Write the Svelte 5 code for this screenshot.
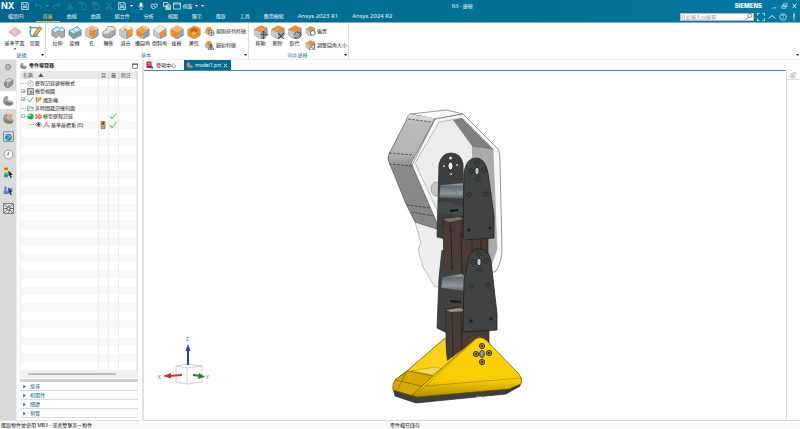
<script>
  const menus = ['首頁', '曲線', '曲面', '組立件', '分析', '視圖', '顯示', '選取', '工具', '應用模組', 'Ansys 2023 R1', 'Ansys 2024 R2'];
  const basic = [
    ['拉伸', 'extrude'], ['旋轉', 'revolve'], ['孔', 'hole'], ['聯集', 'unite'], ['減去', 'subtract'],
    ['邊圓角', 'blend'], ['倒斜角', 'chamfer'], ['拔模', 'draft'], ['薄殼', 'shell']
  ];
  const sync = [['移動', 'move'], ['刪除', 'delete'], ['取代', 'replace']];
  const rail = ['gear', 'assembly', 'part', 'reuse', 'web', 'clock', 'palette', 'role', 'graph'];
  const tree = [
    { text: '歷程記錄建模模式', icon: 'clock' },
    { text: '模型視圖', icon: 'views', box: '+' },
    { text: '攝影機', icon: 'camera', box: '+', check: true },
    { text: '非時間戳記幾何圖', icon: 'folder' },
    { text: '模型歷程記錄', icon: 'history', box: '-', ok: true },
    { text: '基準座標系 (0)', icon: 'csys', child: true, ok: true, mark: true }
  ];
  const rows = [...tree, ...Array(29).fill(null)];
  const sections = ['搜尋', '相關性', '細節', '預覽'];
</script>

{#snippet icon(kind)}
  <svg class="icon" viewBox="0 0 16 16" aria-hidden="true">
    {#if ['hole', 'subtract', 'blend', 'chamfer', 'draft', 'shell', 'move', 'delete', 'replace', 'offset', 'resize'].includes(kind)}
      <path d="M1 5 8 1l7 3v8l-7 4-7-4z" fill="#a4a4a4" stroke="#6b6b6b" stroke-width=".7" />
      <path d="m1 5 7-4 7 3-7 4z" fill="#e6e6e6" />
      <path d="m1 5 7 3v8l-7-4z" fill="#c7c7c7" />
    {/if}
    {#if kind === 'plane'}
      <path d="m1 8 7-5 7 5-7 5z" fill="#f4bccd" stroke="#d66e8c" stroke-width=".7" />
    {:else if kind === 'sketch'}
      <path d="M1 3h11M3 1v12h9" fill="none" stroke="#2d99ba" />
      <circle cx="7" cy="8" r="5" fill="none" stroke="#49a9c4" />
      <path d="m6 13 1-4 6-7 3 2-6 7z" fill="#f5b22d" stroke="#64512d" stroke-width=".7" />
    {:else if kind === 'extrude'}
      <path d="m1 6 6-4 3 2 3-1 3 3v7l-4 2-3-3-3 3-5-3z" fill="#aaa" stroke="#777" stroke-width=".6" />
      <path d="m1 6 6-4 3 2 3-1 3 3-4 2-3-2-4 3z" fill="#d9eff4" stroke="#2bb0cf" />
    {:else if kind === 'revolve'}
      <path d="m1 7 10-5 4 4v6l-9 4-5-5z" fill="#929292" stroke="#777" stroke-width=".6" />
      <path d="m1 7 9-5 5 4-9 4z" fill="#d7eef3" stroke="#2bb0cf" />
      <path d="m4 5 7 4M1 11l5 4 9-4" fill="none" stroke="#56b9cf" />
    {:else if kind === 'hole'}
      <path d="M5 5v7l3 2 3-2V5" fill="#f68b1e" />
      <ellipse cx="8" cy="5" rx="3" ry="2" fill="#ffb15a" stroke="#c46a0c" stroke-width=".5" />
    {:else if kind === 'unite'}
      <path d="M1 9c0-2 2-3 4-3V4c1-3 9-3 10 0v7l-6 4c-4 0-8-1-8-3z" fill="#a9a9a9" stroke="#6d6d6d" stroke-width=".8" />
      <path d="M1 9c0-2 2-3 4-3V4c1-3 9-3 10 0 0 2-2 3-5 3-1 4-9 4-9 2z" fill="#e4e4e4" stroke="#888" stroke-width=".5" />
    {:else if kind === 'subtract'}
      <path d="m6 4 9-2v9l-5 2V8L5 6z" fill="#f8922b" /><path d="m6 2 4-1 5 3-5 2z" fill="#f6f6f6" />
    {:else if kind === 'blend'}
      <path d="m1 6 7 3-1 5-6-3z" fill="#ed851d" /><path d="m1 6 5-4 8 3-6 4z" fill="#ffa23a" /><path d="m9 9 6-4v7l-7 4z" fill="#999" />
    {:else if kind === 'chamfer'}
      <path d="m7 9 7-5 1 5-7 5z" fill="#f4902b" /><path d="m1 5 7-4 6 3-7 5z" fill="#eee" />
    {:else if kind === 'draft'}
      <path d="m1 5 8 3-1 8-6-4z" fill="#f38a23" /><path d="m1 5 7-4 7 3-6 4z" fill="#ffb25c" />
    {:else if kind === 'shell'}
      <path d="m1 5 7-4 7 3v8l-7 4-7-4z" fill="#f58c23" /><path d="m4 5 4-2 4 2v5l-4 2-4-2z" fill="#bd640b" /><path d="m4 9 4-2 4 2-4 3z" fill="#ffb35b" />
    {:else if kind === 'move' || kind === 'delete' || kind === 'replace' || kind === 'offset' || kind === 'resize'}
      <path d="m1 5 7-4 7 3-7 4z" fill="#f7942c" stroke="#c07626" stroke-width=".5" />
      {#if kind === 'move'}<path d="M11 7v9M7 11h9M9 9l2-2 2 2M9 14l2 2 2-2" fill="none" stroke="#444" />
      {:else if kind === 'delete'}<path d="m8 9 7 7m0-7-7 7" stroke="#444" stroke-width="1.2" />
      {:else if kind === 'replace'}<path d="M7 12c0-5 5-5 8-2l-2 1m2 0c-1 5-5 5-8 3" fill="none" stroke="#444" />
      {:else if kind === 'offset'}<path d="m8 9 4-2 3 2v4l-3 2-4-2z" fill="#fff" stroke="#333" />
      {:else}<path d="M6 16c1-5 4-8 8-9v9z" fill="#eee" stroke="#444" /><path d="m9 11 5 4" stroke="#444" />{/if}
    {:else if kind === 'pattern' || kind === 'mirror'}
      <path d="m1 7 5-3 5 3v5l-5 2-5-3z" fill="#bbb" stroke="#777" stroke-width=".6" />
      <path d="m3 3 4-2 4 2v4L7 9 3 7z" fill="#f58b20" />
      {#if kind === 'pattern'}<rect x="7" y="7" width="8" height="8" rx="2" fill="#eee" stroke="#444" /><path d="M11 7v8M7 11h8" stroke="#444" />
      {:else}<path d="m6 15 4-8v8zm5 0V7l4 8z" fill="#eee" stroke="#333" />{/if}
    {:else if kind === 'gear'}
      <circle cx="8" cy="8" r="5" fill="none" stroke="#777" stroke-width="2.5" stroke-dasharray="2 1.2" />
      <circle cx="8" cy="8" r="4" fill="#ddd" stroke="#777" /><circle cx="8" cy="8" r="1.5" fill="#777" />
    {:else if kind === 'assembly'}
      <path d="m3 6 6-4 5 2v6l-5 5-3 1-4-4z" fill="#8f8f8f" stroke="#555" stroke-width=".8" /><path d="m3 6 6-4 5 2-6 4z" fill="#d6d6d6" /><path d="M7 8v6" stroke="#ddd" />
    {:else if kind === 'part' || kind === 'reuse'}
      <path d="M1 9c0-6 4-8 6-6v5l7 2c2 4-3 6-7 5-4 0-6-2-6-6z" fill="#8b8b8b" stroke="#5b5b5b" stroke-width=".7" />
      <path d="M3 9c0-3 1-5 3-5l1 5 6 2" fill="none" stroke="#ddd" stroke-width="1" />
      <path d="M4 11c2 2 5 2 9 1" fill="none" stroke="#555" stroke-width=".8" />
      {#if kind === 'reuse'}<path d="m8 1 3 1 3-1-1 4 2 3-4-1-3 2V5z" fill="#f2a04e" />{/if}
    {:else if kind === 'web'}
      <path d="M1 1h14v14H1z" fill="#dce6e8" stroke="#555" /><circle cx="8" cy="9" r="5" fill="#2489a4" /><path d="M4 7c4-3 7 2 8 3M6 13c2-4 3-5 6-6" fill="none" stroke="#b9dfe3" />
    {:else if kind === 'clock'}
      <circle cx="8" cy="8" r="6.5" fill="#f5f5f5" stroke="#777" /><path d="M8 4v4H5" fill="none" stroke="#555" />
    {:else if kind === 'palette'}
      <path d="M2 1h5v4H2z" fill="#ef3c1c" /><path d="M2 4h5v4H2z" fill="#f9e628" /><path d="M2 8h5v4H2z" fill="#20d948" /><path d="M2 11h5v4H2z" fill="#237eed" /><path d="m8 5 6 6-3 1 2 3-2 1-2-4-1 1z" fill="#222" />
    {:else if kind === 'role'}
      <path d="M2 2h3v7h3v4H1V9h1zm5 2 7 1-1 4-6-1z" fill="#4887cf" /><path d="m8 5 6 5-3 1 2 3-2 1-2-4-1 1z" fill="#26384c" />
    {:else if kind === 'graph'}
      <path d="M1 1h14v14H1z" fill="#eee" stroke="#333" /><path d="m2 2 12 12M2 14 14 2M2 8h4l3-5M8 14l2-6h5" stroke="#333" fill="none" /><path d="M6 6h4v4H6z" fill="#fff" stroke="#333" />
    {:else if kind === 'views'}
      <path d="M1 1h14v14H1z" fill="#fff" stroke="#444" stroke-width="1.5" /><path d="M1 4h14M4 4v11" stroke="#555" /><path d="M7 7h5v5H7z" fill="#bbb" stroke="#333" />
    {:else if kind === 'camera'}
      <path d="M2 2h3v12H2zm5 3 7-3v6l-5 2-2 4z" fill="#ef9852" stroke="#9d5c30" stroke-width=".7" />
    {:else if kind === 'folder'}
      <path d="M1 13V3h5l2 2h6v2M1 13l3-6h12l-3 6z" fill="#fafafa" stroke="#555" />
    {:else if kind === 'history'}
      <path d="M1 2h4v12H1z" fill="#d4915b" /><path d="m6 5 4-2 5 2v6l-5 3-4-3z" fill="#ef8738" stroke="#8f674c" /><path d="m6 5 4 3 5-3" fill="none" stroke="#ffdbb3" />
    {:else if kind === 'csys'}
      <path d="m8 2 2 6 5 6-7-3-7 3 5-6z" fill="#f7bcc8" stroke="#d64d6c" stroke-width="1.2" />
    {:else if kind === 'eye'}
      <path d="M1 8c4-6 10-6 14 0-4 6-10 6-14 0z" fill="#fff" stroke="#222" stroke-width="1.3" /><circle cx="8" cy="8" r="3" fill="#222" />
    {:else if kind === 'check'}
      <path d="m2 8 4 6 9-12" fill="none" stroke="#2cce37" stroke-width="2" />
    {:else if kind === 'ball'}
      <circle cx="8" cy="8" r="7" fill="#1fae35" /><circle cx="6" cy="5" r="3" fill="#9aec9c" />
    {:else if kind === 'mark'}
      <path d="M4 1h8v14H4z" fill="#d89b6b" stroke="#64473a" /><path d="M6 3h4v4H6z" fill="#444" />
    {:else if kind === 'save'}
      <path d="M1 1h12l2 2v12H1zm3 0v5h8V1M4 15v-6h8v6M5 11h6" fill="none" stroke="currentColor" stroke-width="1.3" />
    {:else if kind === 'undo'}
      <path d="M6 2 2 6l4 4M2 6h8c6 0 6 7 1 8" fill="none" stroke="currentColor" stroke-width="1.3" />
    {:else if kind === 'redo'}
      <path d="m10 2 4 4-4 4m4-4H6c-6 0-6 7-1 8" fill="none" stroke="currentColor" stroke-width="1.3" />
    {:else if kind === 'cut'}
      <path d="m4 1 6 10M12 1 6 11" stroke="currentColor" /><circle cx="4" cy="13" r="2" fill="none" stroke="currentColor" /><circle cx="12" cy="13" r="2" fill="none" stroke="currentColor" />
    {:else if kind === 'copy'}
      <path d="M5 4H1V1h8v3M5 4h9v11H5z" fill="none" stroke="currentColor" />
    {:else if kind === 'mic'}
      <rect x="5" y="1" width="6" height="9" rx="3" fill="currentColor" /><path d="M3 7c0 7 10 7 10 0M8 12v4M5 15h6" fill="none" stroke="currentColor" />
    {:else if kind === 'hand'}
      <path d="M2 9c-1-5 3-6 6-3l3-2c4-1 5 4 2 6-3 1-4-1-5-3M5 8l-2 3 4 3 3-3" fill="none" stroke="currentColor" stroke-width="1.7" />
    {:else if kind === 'switch'}
      <path d="M1 1h9v8H1zm5 5h9v9H6z" fill="none" stroke="currentColor" stroke-width="1.5" /><path d="M6 9h8v5H6z" fill="currentColor" opacity=".6" />
    {:else if kind === 'window'}
      <path d="M1 2h14v12H1zM1 4h14" fill="none" stroke="currentColor" stroke-width="1.5" />
    {:else if kind === 'minimize'}
      <path d="M3 13h10" stroke="currentColor" stroke-width="2" />
    {:else if kind === 'restore'}
      <path d="M5 2h10v7H5zM1 7h10v7H1z" fill="none" stroke="currentColor" stroke-width="1.7" />
    {:else if kind === 'close'}
      <path d="m3 2 10 12M13 2 3 14" stroke="currentColor" stroke-width="2.4" />
    {:else if kind === 'full'}
      <path d="M1 5V1h4m6 0h4v4m0 6v4h-4m-6 0H1v-4" fill="none" stroke="currentColor" stroke-width="1.6" />
    {:else if kind === 'up'}
      <path d="m1 11 7-6 7 6" fill="none" stroke="currentColor" stroke-width="1.8" />
    {:else if kind === 'help'}
      <circle cx="8" cy="8" r="6.5" fill="none" stroke="currentColor" stroke-width="1.3" /><path d="M6 6c0-3 5-2 4 0-1 1-2 1-2 3m0 1v2" fill="none" stroke="currentColor" stroke-width="1.4" />
    {:else if kind === 'alert'}
      <path d="M8 1v10m0 2v2" stroke="currentColor" stroke-width="2.4" />
    {:else if kind === 'search'}
      <circle cx="10" cy="6" r="4.5" fill="#fff" stroke="#555" stroke-width="1.5" /><path d="m7 9-6 6" stroke="#555" stroke-width="2" />
    {:else if kind === 'discover'}
      <path d="M1 1h10v13H1z" fill="#c22445" /><path d="m3 3 6 5m0-5-5 7" stroke="#fff" /><path d="m9 8 6 4-2 4-5-2z" fill="#666" />
    {:else if kind === 'arrow'}
      <path d="m3 5 5 6 5-6z" fill="currentColor" />
    {:else if kind === 'right'}
      <path d="m4 2 8 6-8 6z" fill="currentColor" />
    {:else if kind === 'note'}
      <path d="m2 7 8-5 5 2-7 6zM1 10h12l-2 4H3z" fill="#ddd" stroke="#b6b6b6" />
    {/if}
  </svg>
{/snippet}

{#snippet holes(x, y)}
  <g transform="translate({x} {y})">
    <ellipse cx="0" cy="0" rx="2.4" ry="3.7" fill="#9aa6aa" stroke="#222" /><path d="M0-3v6" stroke="#e7edef" />
    {#each [[0, -8], [-6, 0], [7, -1], [1, 8], [-8, 24], [9, 23]] as [a, b]}
      <circle cx={a} cy={b} r="2.2" fill="#4d5051" stroke="#1e1e1e" stroke-width=".8" /><circle cx={a} cy={b} r=".8" fill="#222" />
    {/each}
  </g>
{/snippet}

<div class="app">
  <header>
    <div class="titlebar">
      <strong class="logo">NX</strong>
      <div class="quick">
        <button aria-label="儲存">{@render icon('save')}</button>
        <button class="dim" aria-label="復原">{@render icon('undo')}</button>
        <button class="dim slim" aria-label="復原清單">{@render icon('arrow')}</button>
        <button class="dim" aria-label="重做">{@render icon('redo')}</button>
        <button class="dim" aria-label="剪下">{@render icon('cut')}</button>
        <button class="dim" aria-label="複製">{@render icon('copy')}</button>
        <button class="dim" aria-label="貼上">{@render icon('copy')}</button>
        <button class="dim" aria-label="刪除">{@render icon('cut')}</button>
        <button aria-label="另存">{@render icon('save')}</button>
        <button class="slim" aria-label="儲存選項">{@render icon('arrow')}</button>
        <button aria-label="語音">{@render icon('mic')}</button>
        <button aria-label="觸控">{@render icon('hand')}</button>
        <button aria-label="切換視窗">{@render icon('switch')}</button>
        <button class="label">{@render icon('window')}視窗{@render icon('arrow')}</button>
        <button class="slim" aria-label="自訂">{@render icon('arrow')}</button>
      </div>
      <span class="title">NX - 建模</span>
      <div class="system">
        <strong>SIEMENS</strong>
        <button aria-label="最小化">{@render icon('minimize')}</button>
        <button aria-label="還原">{@render icon('restore')}</button>
        <button aria-label="關閉">{@render icon('close')}</button>
      </div>
    </div>
    <div class="menubar">
      <nav>
        <button class="file">檔案(F)</button>
        {#each menus as m, i}<button class:active={i === 0}>{m}</button>{/each}
      </nav>
      <div class="tools">
        <label class="search"><input aria-label="搜尋指令" placeholder="在此輸入以搜尋" />{@render icon('search')}</label>
        <button aria-label="全螢幕">{@render icon('full')}</button>
        <button aria-label="收合">{@render icon('up')}</button>
        <button aria-label="說明">{@render icon('help')}</button>
        <button aria-label="通知">{@render icon('alert')}</button>
      </div>
    </div>
  </header>

  <section class="ribbon">
    <div class="group build">
      <div class="commands">
        <button class="big plane">{@render icon('plane')}<span>基準平面</span>{@render icon('arrow')}</button>
        <button class="big">{@render icon('sketch')}<span>草圖</span></button>
      </div>
      <footer><span>建構</span>{@render icon('arrow')}</footer>
    </div>
    <div class="group base">
      <div class="commands">
        {#each basic as [name, kind]}<button class="big">{@render icon(kind)}<span>{name}</span></button>{/each}
        <div class="stack">
          <button>{@render icon('pattern')}規則排列特徵</button>
          <button>{@render icon('mirror')}鏡射特徵</button>
        </div>
      </div>
      <footer><span>基本</span>{@render icon('arrow')}</footer>
    </div>
    <div class="group sync">
      <div class="commands">
        {#each sync as [name, kind]}<button class="big">{@render icon(kind)}<span>{name}</span></button>{/each}
        <div class="stack">
          <button>{@render icon('offset')}偏置</button>
          <button>{@render icon('resize')}調整圓角大小</button>
        </div>
      </div>
      <footer><span>同步建模</span>{@render icon('arrow')}</footer>
    </div>
    <button class="options" aria-label="功能區選項">{@render icon('arrow')}</button>
  </section>

  <main>
    <aside class="rail">
      {#each rail as r}<button class:selected={r === 'part'} aria-label={r}>{@render icon(r)}</button>{/each}
    </aside>
    <section class="navigator">
      <h2>{@render icon('part')}<span>零件導覽器</span>{@render icon('window')}</h2>
      <table>
        <thead><tr><th>名稱 <i>▲</i></th><th>目</th><th>最</th><th>附註</th></tr></thead>
        <tbody>
          {#each rows as r}
            <tr>
              <td>
                {#if r}
                  <div class="node" class:child={r.child}>
                    <span class="branch">{#if r.box}<b>{r.box}</b>{/if}</span>
                    {#if r.check}{@render icon('check')}{/if}
                    {#if r.icon === 'history'}{@render icon('ball')}{/if}
                    {#if r.child}{@render icon('eye')}{/if}
                    {@render icon(r.icon)}<span>{r.text}</span>
                  </div>
                {/if}
              </td>
              <td>{#if r?.mark}{@render icon('mark')}{/if}</td>
              <td>{#if r?.ok}{@render icon('check')}{/if}</td>
              <td></td>
            </tr>
          {/each}
        </tbody>
      </table>
      <div class="scroll"><span></span></div>
      <div class="sections">
        {#each sections as s}<button>{@render icon('right')}{s}</button>{/each}
      </div>
    </section>
    <section class="work">
      <div class="tabs">
        <button>{@render icon('discover')}發現中心</button>
        <button class="current">{@render icon('part')}model1.prt {@render icon('close')}</button>
      </div>
      <div class="stage">
        <div class="canvas">
          <svg viewBox="144 71 642 349" role="img" aria-label="model1.prt">
            <defs>
              <linearGradient id="side" x1="0" y1="0" x2="0" y2="1"><stop offset="0" stop-color="#c5c5c5" /><stop offset=".1" stop-color="#bababa" /><stop offset=".34" stop-color="#b4b4b4" /><stop offset=".46" stop-color="#8a8a8a" /><stop offset="1" stop-color="#868686" /></linearGradient>
              <linearGradient id="tube" x1="0" y1="0" x2="0" y2="1"><stop offset="0" stop-color="#bdc9cc" /><stop offset=".2" stop-color="#606b71" /><stop offset=".65" stop-color="#8d979b" /><stop offset="1" stop-color="#50575c" /></linearGradient>
              <linearGradient id="yellow" x1="0" y1="0" x2="0" y2="1"><stop offset="0" stop-color="#ffd20c" /><stop offset=".72" stop-color="#f9cc00" /><stop offset="1" stop-color="#b48c00" /></linearGradient>
            </defs>
            <g stroke-linejoin="round">
              <path d="m415 222 6 21-3 7 5 17 12 20h12v-75z" fill="#eee" stroke="#888" stroke-width=".5" />
              <path d="m410 114 37-4 16 4-28 5z" fill="#fafafa" stroke="#555" stroke-width=".6" />
              <path d="m435 119 28-5 34 34q3 2 3 14l2 90q-2 15-7 20l-20 2-36-40-28-67z" fill="#f7f7f7" stroke="#555" stroke-width=".6" />
              <path d="m439 122 23-4 31 31 4 100-8 22-14 2-32-50-28-60z" fill="#ececec" stroke="#888" stroke-width=".5" />
              <path d="m453 120 9-2 31 31-21-3z" fill="#808080" />
              <path d="m472 146 21 3 4 100-8 22-15 2z" fill="#aaa" /><path d="m472 146 21 3" stroke="#555" stroke-width=".6" />
              <path d="M410 114q-3 2-4 7l-17 33q-2 4 0 8l17 42 9 18 25 8-29-67 24-44z" fill="url(#side)" stroke="#555" stroke-width=".7" />
              <path d="M410 114q-3 2-3 5l24 3 4-4z" fill="#d6d6d6" />
              <path d="m408 119 24 3M389 153l24 2M389 164l23 2M407 205l23 3m-19 4 23 4" stroke="#333" stroke-width=".7" stroke-dasharray="3 1" />

              <ellipse cx="436" cy="189" rx="5" ry="7" fill="#c7c7c7" stroke="#777" stroke-width=".5" />
              <path d="M439 164q3-11 12-11 10 0 12 11l1 74-18 1-9-2z" fill="#3d3e3f" stroke="#222" stroke-width=".7" />
              <ellipse cx="450.5" cy="166" rx="2.6" ry="4" fill="#f4f4f4" stroke="#222" /><circle cx="450.5" cy="158" r="1.5" fill="#ddd" /><g fill="#d0d0d0"><circle cx="444" cy="166" r="1" /><circle cx="457" cy="165" r="1" /><circle cx="451" cy="174" r="1" /></g>
              <path d="m440 185 23-2 1 16-25-1z" fill="url(#tube)" stroke="#333" stroke-width=".5" />
              <path d="m438 203 9-2 16 7v8l-25-4z" fill="#494a4a" /><path d="m450 211 8-1" stroke="#111" stroke-width="2" />
              <path d="m443 219 16-2 29 18v32l-21 6-23-5z" fill="#4c3b35" stroke="#282321" stroke-width=".7" />
              <path d="m450 220 1 50m11-50 1 53M472 239v20m9-20v20" stroke="#221b18" stroke-width=".6" />
              <path d="m443 219 16-2 5 2-15 3z" fill="#827169" />
              <path d="M464 173q2-15 12-15 9 0 12 15l6 43v22l-31 2z" fill="#414243" stroke="#202020" stroke-width=".8" />
              <path d="M467 165q1-7 9-7" fill="none" stroke="#777" stroke-width=".5" />
              {@render holes(477, 171)}
              <circle cx="469" cy="230" r="1.7" fill="#222" /><circle cx="490" cy="228" r="1.7" fill="#222" />
              <path d="m442 250-3 28-2 50 10 5 20-11V276z" fill="#414141" stroke="#222" stroke-width=".7" />
              <path d="m443 228 24 12v33l-23-5z" fill="#4c3b35" /><path d="m451 228 1 42m9-38 1 41" stroke="#2b211e" />
              <path d="m442 277 19-3 6 3v15l-26-4z" fill="url(#tube)" stroke="#333" stroke-width=".5" />
              <path d="m450 301 11 1" stroke="#191919" stroke-width="2" />
              <path d="m446 309 12-2 31 18v28l-43 8z" fill="#483c36" stroke="#292421" stroke-width=".7" />
              <path d="m446 310 14-2 5 3-14 1z" fill="#99918c" /><path d="m452 312 1 47m8-46 1 45" stroke="#2b2522" />
              <path d="M468 261q2-12 11-12 10 0 12 12l6 53v16l-34 2 1-51z" fill="#414243" stroke="#202020" stroke-width=".8" />
              {@render holes(479, 262)}
              <circle cx="471" cy="321" r="1.7" fill="#222" /><circle cx="491" cy="319" r="1.7" fill="#222" />

              <path d="m445 338-37 32-13 10-2 8 8 5 61-39-16 7z" fill="#e9b900" stroke="#6a5200" stroke-width=".7" />
              <path d="m408 371 30 4 31-30-22 16-2-22z" fill="#fbd21a" /><path d="m411 371 25-4 6 2-10 6z" fill="#f1dd55" stroke="#a48300" stroke-width=".5" />
              <path d="m393 388 2 8 21 7 90-9 14-8 1-8z" fill="#3e3e3d" stroke="#222" stroke-width=".7" />
              <path d="m408 371 26 5-17 21-24-7v-6l3-5z" fill="#d8a900" stroke="#6b5300" stroke-width=".6" />
              <path d="m396 380 29 7M406 373l-9 17" stroke="#6b5300" stroke-width=".6" />
              <path d="m424 384 50-44q6-5 12 0l33 34q4 5 2 10l-12 5-92 8-5-2z" fill="url(#yellow)" stroke="#6b5300" stroke-width=".7" />
              <path d="m419 392 56-52m-49 46 95-8" fill="none" stroke="#8b6b00" stroke-width=".5" />
              <g fill="#a78b27" stroke="#3f3515">
                <circle cx="482" cy="346" r="2.6" /><circle cx="476" cy="354" r="2.6" /><circle cx="489" cy="353" r="2.6" /><circle cx="482" cy="362" r="2.6" /><ellipse cx="482" cy="354" rx="2.4" ry="3.5" fill="#929b9e" />
              </g>
              <g fill="#333"><circle cx="482" cy="346" r="1" /><circle cx="476" cy="354" r="1" /><circle cx="489" cy="353" r="1" /><circle cx="482" cy="362" r="1" /></g>
              <path d="m476 396 8 1" stroke="#8c9930" />
            </g>
            <g fill="none" stroke="#bbb" stroke-width=".7"><path d="m176 366 11-2 15 2-15 2zM176 366v16l11 2v-16m0 16 15-2v-16" /></g>
            <path d="M188 365v-16" stroke="#173eec" stroke-width="2" /><path d="m185.500 351 2.500-7 2.500 7z" fill="#173eec" />
            <path d="m182 375-13 1" stroke="#d52e35" stroke-width="2" /><path d="m171 373-8 3 8 2.500z" fill="#d52e35" />
            <path d="m193 375 8 1" stroke="#267f2b" stroke-width="2" /><path d="m199 373 6 4-7 2z" fill="#267f2b" />
            <g class="axis"><text x="186" y="341" fill="#3853cd">Z</text><text x="158" y="379" fill="#d34950">X</text><text x="206" y="379" fill="#3b8b43">Y</text></g>
          </svg>
        </div>
        <aside class="right"><button aria-label="註記">{@render icon('note')}</button></aside>
      </div>
    </section>
  </main>
  <footer class="status"><span>選取物件並使用 MB3 - 或者雙擊某一物件</span><span>零件檔已儲存</span></footer>
</div>

<style>
  .app { height: 100vh; display: flex; flex-direction: column; background: #fff; color: #222; font: 5px/8px "Noto Sans", "Noto Sans CJK TC", sans-serif; overflow: hidden; }
  .app * { box-sizing: border-box; }
  button { border: 0; padding: 0; margin: 0; background: none; font: inherit; color: inherit; display: flex; align-items: center; white-space: nowrap; }
  .icon { width: 8px; height: 8px; flex: none; display: block; }
  header { flex: none; height: 23px; background: linear-gradient(90deg, #00668b, #04789f); color: #e8f6fa; border-bottom: 1px solid #78b4ca; }
  .titlebar { height: 11px; display: grid; grid-template-columns: 58fr auto 42fr; align-items: center; }
  .titlebar > .logo { grid-area: 1 / 1; padding-left: 1px; font: bold 9px/11px Inter, sans-serif; color: #fff; }
  .quick { grid-area: 1 / 1; display: flex; align-items: center; padding-left: 18px; }
  .quick button { width: 13px; justify-content: center; }
  .quick .slim { width: 6px; }
  .quick .slim .icon, .label .icon:last-child { width: 5px; }
  .quick .label { width: 26px; gap: 1px; }
  .dim { opacity: .3; }
  .title { grid-area: 1 / 2; }
  .system { grid-area: 1 / 3; display: flex; justify-content: flex-end; align-items: center; gap: 3px; padding-right: 2px; }
  .system strong { font: 800 6px/8px Inter, sans-serif; margin-right: 6px; color: #fff; }
  .system .icon { width: 7px; height: 6px; }
  .menubar { height: 11px; display: flex; justify-content: space-between; }
  nav { display: flex; }
  nav button { padding: 0 7px; border-bottom: 1px solid transparent; }
  nav .file { padding-right: 12px; padding-left: 8px; }
  nav .active { color: #edc84c; border-color: #d4b849; }
  nav button:nth-last-child(-n + 2) { font-size: 6px; }
  .tools { display: flex; align-items: center; gap: 3px; padding-right: 2px; }
  .search { display: flex; align-items: center; height: 8px; width: 74px; background: #fff; border: 1px solid #bbb; }
  .search input { min-width: 0; flex: 1; height: 6px; padding: 0; border: 0; background: none; font: inherit; line-height: 6px; }
  .search input::placeholder { color: #999; }
  .search .icon { height: 7px; }
  .ribbon { flex: none; height: 37px; border-bottom: 1px solid #eee; display: flex; }
  .group { display: flex; flex-direction: column; justify-content: space-between; border-right: 1px solid #ddd; padding: 1px 0 0 3px; }
  .build { width: 46px; }
  .base { width: 203px; }
  .sync { width: 100px; }
  .commands { display: flex; align-items: flex-start; }
  .big { width: 17px; flex-direction: column; height: 26px; padding-top: 1px; }
  .big > .icon:first-child { width: 14px; height: 14px; }
  .big > .icon:last-child { width: 4px; height: 4px; }
  .plane { width: 23px; }
  .stack { display: flex; flex-direction: column; gap: 4px; padding: 2px 0 0 2px; }
  .stack button { gap: 1px; }
  .stack .icon { width: 11px; height: 10px; }
  .group footer { display: flex; align-items: center; color: #287c99; }
  .group footer span { flex: 1; text-align: center; }
  .group footer .icon { width: 5px; color: #222; }
  .options { margin-left: auto; align-self: flex-end; }
  .options .icon { width: 5px; }
  main { flex: 1; min-height: 0; display: flex; }
  .rail { width: 16px; flex: none; background: #dadada; }
  .rail button { width: 16px; height: 18px; justify-content: center; }
  .rail button:first-child { height: 13px; }
  .rail .icon { width: 11px; height: 11px; }
  .rail button:first-child .icon { width: 8px; height: 8px; }
  .rail .selected { background: #fff; }
  .navigator { width: 128px; flex: none; display: flex; flex-direction: column; padding: 0 4px 2px 3px; border-right: 2px solid #e0e0e0; border-left: 1px solid #eee; }
  h2 { display: flex; align-items: center; gap: 2px; margin: 0; height: 11px; font: bold 5px/9px "Noto Sans", "Noto Sans CJK TC", sans-serif; }
  h2 span { flex: 1; }
  h2 .icon { width: 7px; height: 7px; }
  h2 .icon:last-child { width: 6px; height: 6px; }
  table { flex: 1; min-height: 0; display: flex; flex-direction: column; border-right: 1px solid #ddd; border-left: 1px solid #eee; }
  tr { display: grid; grid-template-columns: 1fr 10px 10px 18px; min-height: 0; }
  thead tr { height: 8px; background: #e8e8e8; }
  th { padding: 0 2px; font-weight: normal; text-align: left; color: #555; border-right: 1px solid #ddd; }
  i { font-style: normal; padding-left: 4px; }
  tbody { flex: 1; min-height: 0; display: grid; grid-auto-rows: 1fr; }
  td { min-width: 0; padding: 0; border-right: 1px solid #eee; display: flex; align-items: center; white-space: nowrap; }
  tr:nth-child(even) td { background: #f8f8f8; }
  .node { display: flex; align-items: center; gap: 1px; }
  .node .icon { width: 7px; height: 7px; }
  .child { padding-left: 8px; }
  .branch { width: 5px; height: 1px; border-bottom: 1px dotted #aaa; display: flex; align-items: center; }
  b { width: 4px; height: 4px; border: 1px solid #bbb; background: #fff; font: 4px/2px "Noto Sans", sans-serif; }
  .scroll { flex: none; height: 8px; background: #f1f1f1; display: flex; align-items: center; padding: 0 8px; }
  .scroll span { width: 86%; height: 2px; background: #bbb; }
  .sections { border-top: 3px solid #d0d0d0; flex: none; margin-top: 1px; }
  .sections button { width: 100%; height: 9px; gap: 3px; padding-left: 2px; color: #176f8f; border-bottom: 1px solid #ddd; }
  .sections .icon { width: 5px; height: 5px; }
  .work { flex: 1; min-width: 0; display: flex; flex-direction: column; }
  .tabs { height: 11px; flex: none; display: flex; margin-right: 14px; border-bottom: 1px solid #3c8bac; }
  .tabs button { width: 40px; gap: 2px; padding-left: 2px; }
  .tabs .current { width: 47px; background: #006b90; color: #fff; gap: 1px; }
  .tabs .current .icon:last-child { width: 5px; height: 5px; margin-left: 1px; }
  .stage { flex: 1; min-height: 0; display: flex; }
  .canvas { flex: 1; min-width: 0; min-height: 0; }
  .canvas svg { display: block; width: 100%; height: 100%; }
  .axis { font: 5px "Noto Sans", sans-serif; }
  .right { width: 14px; flex: none; border-left: 1px solid #ddd; }
  .right button { width: 12px; height: 9px; border-bottom: 1px solid #ddd; justify-content: center; }
  .status { flex: none; height: 9px; border-top: 1px solid #ddd; background: #fafafa; display: grid; grid-template-columns: 389px 1fr; padding-left: 1px; }
</style>
